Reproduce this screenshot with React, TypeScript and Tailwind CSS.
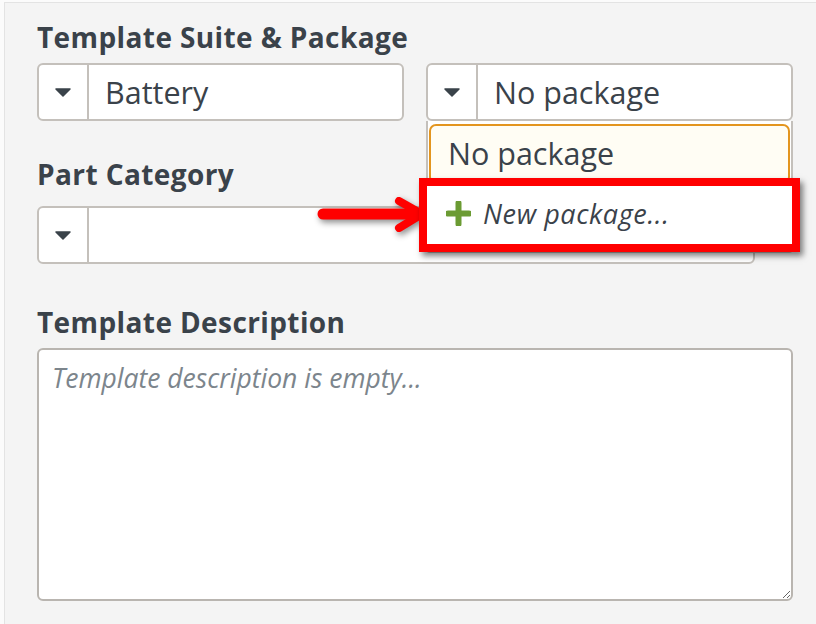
import React from "react";

const font = { fontFamily: "'Open Sans', Lato, sans-serif" };

function Caret() {
  return (
    <svg width="16" height="9" viewBox="0 0 16 9" className="block">
      <path d="M1 1 L15 1 L8 8 Z" fill="#3a434a" stroke="#3a434a" strokeWidth="1.5" strokeLinejoin="round" />
    </svg>
  );
}

function Select({ value, className }: { value?: string; className?: string }) {
  return (
    <div className={`flex h-[58px] rounded-[6px] border-2 border-[#c4c0bb] bg-white ${className ?? ""}`}>
      <div className="flex w-[50px] shrink-0 items-center justify-center border-r-2 border-[#c4c0bb]">
        <Caret />
      </div>
      <div className="flex items-center pl-[16px] text-[30.5px] leading-none text-[#3a424a]">{value}</div>
    </div>
  );
}

function Heading({ children, className }: { children: React.ReactNode; className?: string }) {
  return (
    <h2 className={`text-[28px] font-bold leading-[32px] tracking-[0.4px] text-[#3a424a] ${className ?? ""}`}>
      {children}
    </h2>
  );
}

export default function App() {
  return (
    <div className="h-[624px] w-[816px] overflow-hidden bg-[#fbfbfb] pl-[4px] pt-[2px]" style={font}>
      <div className="relative h-full border-l border-t border-[#e3e3e3] bg-[#f4f4f4] pl-[32px] pt-[18px]">
        <Heading>Template Suite &amp; Package</Heading>
        <div className="mt-[10px] flex gap-[22px]">
          <Select value="Battery" className="w-[367px]" />
          <Select value="No package" className="w-[367px]" />
        </div>

        <Heading className="mt-[37px]">Part Category</Heading>
        <Select className="mt-[16px] w-[718px]" />

        <Heading className="mt-[42px]">Template Description</Heading>
        <textarea
          placeholder="Template description is empty..."
          className="mt-[10px] block h-[253px] w-[756px] rounded-[6px] border-2 border-[#b9b5b0] bg-white px-[13px] pt-[10px] text-[26.5px] italic leading-[36px] text-[#3a424a] outline-none placeholder:text-[#7c858c]"
          style={font}
        />

        {/* open dropdown */}
        <div className="absolute left-[421px] top-[118px] h-[132px] w-[367px] rounded-b-[4px] border-2 border-t-0 border-[#c4c0bb] bg-white">
          <div className="mx-[1px] mt-[3px] flex h-[60px] items-center rounded-[7px] border-2 border-[#e3951f] bg-[#fffdf4] pl-[17px] text-[30.5px] text-[#3a424a]">
            No package
          </div>
        </div>

        {/* annotation */}
        <svg
          className="absolute left-[305px] top-[185px] drop-shadow-[2px_3px_3px_rgba(0,0,0,0.45)]"
          width="120"
          height="55"
          viewBox="0 0 120 55"
        >
          <line x1="13" y1="26" x2="108" y2="26" stroke="#ff0000" strokeWidth="11" strokeLinecap="round" />
          <polyline
            points="89,13 112,26 89,40"
            fill="none"
            stroke="#ff0000"
            strokeWidth="8"
            strokeLinecap="round"
            strokeLinejoin="round"
          />
        </svg>
        <div className="absolute left-[414px] top-[175px] flex h-[74px] w-[381px] items-center border-[8px] border-[#ff0000] bg-white pb-[4px] pl-[19px] shadow-[3px_4px_6px_rgba(0,0,0,0.5)]">
          <svg width="25" height="25" viewBox="0 0 25 25" className="shrink-0">
            <path d="M12.5 2 V23 M2 12.5 H23" stroke="#6b9b33" strokeWidth="6" strokeLinecap="round" />
          </svg>
          <span className="ml-[12px] text-[27px] italic leading-none tracking-[0.6px] text-[#3a424a]">
            New package...
          </span>
        </div>
      </div>
    </div>
  );
}
